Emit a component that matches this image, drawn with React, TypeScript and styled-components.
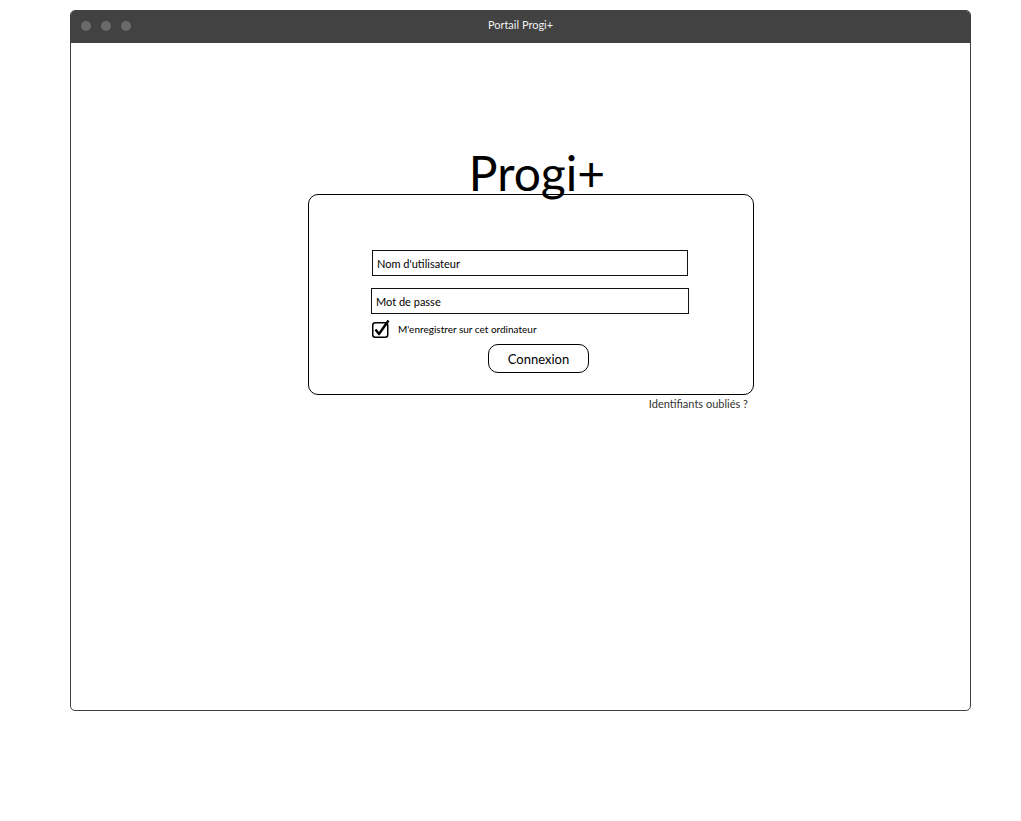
import styled, { createGlobalStyle } from "styled-components"

const GlobalStyle = createGlobalStyle`
  body {
    margin: 0;
    background: #ffffff;
    font-family: Lato, "Noto Sans", sans-serif;
  }
`

const Window = styled.div`
  margin: 10px 0 0 70px;
  width: 899px;
  height: 699px;
  border: 1px solid #424242;
  border-radius: 5px;
  overflow: hidden;
  display: flex;
  flex-direction: column;
`

const TitleBar = styled.div`
  height: 32px;
  box-sizing: border-box;
  padding: 0 10px 2px;
  background: #424242;
  display: grid;
  grid-template-columns: 1fr auto 1fr;
  align-items: center;
`

const Dots = styled.div`
  display: flex;
  gap: 10px;
`

const Dot = styled.span`
  width: 10px;
  height: 10px;
  border-radius: 50%;
  background: #6a6a6a;
`

const WindowTitle = styled.div`
  color: #f0f0f0;
  font-size: 11px;
  margin-top: -3px;
`

const Body = styled.div`
  flex: 1;
  padding: 101px 0 0 237px;
`

const Column = styled.div`
  width: 446px;
  display: flex;
  flex-direction: column;
`

const Heading = styled.h1`
  margin: 0 0 -8px 0;
  padding-left: 12px;
  text-align: center;
  font-size: 48px;
  font-weight: 400;
  line-height: 58px;
  color: #000;
  position: relative;
  z-index: 1;
`

const Card = styled.div`
  height: 201px;
  border: 1px solid #000;
  border-radius: 10px;
  padding: 55px 0 0 63px;
  box-sizing: border-box;
  display: flex;
  flex-direction: column;
  gap: 12px;
`

const Field = styled.input<{ $width: number }>`
  width: ${p => p.$width}px;
  height: 26px;
  box-sizing: border-box;
  border: 1.5px solid #111;
  padding: 0 4px;
  margin-left: ${p => (p.$width > 316 ? -1 : 0)}px;
  font-family: Lato, "Noto Sans", sans-serif;
  font-size: 11px;
  color: #000;
  outline: none;
  &::placeholder {
    color: #000;
  }
`

const CheckRow = styled.label`
  display: flex;
  align-items: center;
  gap: 8px;
  margin-top: -7px;
  font-size: 10px;
  color: #000;
`

const ButtonRow = styled.div`
  display: flex;
  padding-left: 116px;
  margin-top: -6px;
`

const Button = styled.button`
  width: 101px;
  height: 29px;
  border: 1px solid #000;
  border-radius: 10px;
  background: #fff;
  font-family: Lato, "Noto Sans", sans-serif;
  font-size: 13px;
  color: #000;
`

const Forgot = styled.a`
  align-self: flex-end;
  margin: 2px 6px 0 0;
  font-size: 11px;
  color: #333;
  text-decoration: none;
`

const CheckIcon = () => (
  <svg width="18" height="19" viewBox="0 0 18 19">
    <rect x="0.75" y="3.75" width="15" height="14.5" rx="2.5" fill="none" stroke="#000" strokeWidth="1.5" />
    <path d="M3.5 10.5 L7 15 L16.5 1.5" fill="none" stroke="#000" strokeWidth="2.4" strokeLinejoin="round" />
  </svg>
)

export default function App() {
  return (
    <>
      <GlobalStyle />
      <Window>
        <TitleBar>
          <Dots>
            <Dot />
            <Dot />
            <Dot />
          </Dots>
          <WindowTitle>Portail Progi+</WindowTitle>
          <div />
        </TitleBar>
        <Body>
          <Column>
            <Heading>Progi+</Heading>
            <Card>
              <Field $width={316} placeholder="Nom d'utilisateur" />
              <Field $width={318} placeholder="Mot de passe" type="password" />
              <CheckRow>
                <CheckIcon />
                M'enregistrer sur cet ordinateur
              </CheckRow>
              <ButtonRow>
                <Button>Connexion</Button>
              </ButtonRow>
            </Card>
            <Forgot href="#">Identifiants oubliés ?</Forgot>
          </Column>
        </Body>
      </Window>
    </>
  )
}
